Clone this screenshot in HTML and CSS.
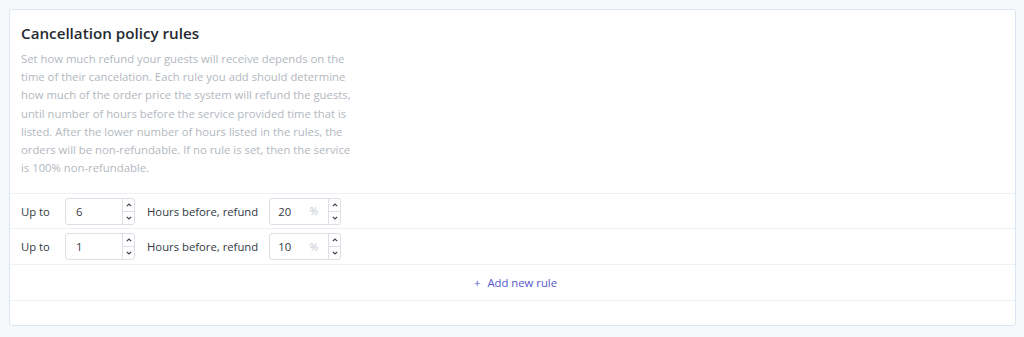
FILE: index.html
```html
<!DOCTYPE html>
<html>
<head>
<meta charset="utf-8">
<link rel="stylesheet" href="styles.css">
</head>
<body>
<div class="card">
  <div class="head">
    <h2 class="title">Cancellation policy rules</h2>
    <p class="desc">Set how much refund your guests will receive depends on the time of their cancelation. Each rule you add should determine how much of the order price the system will refund the guests, until number of hours before the service provided time that is listed. After the lower number of hours listed in the rules, the orders will be non-refundable. If no rule is set, then the service is 100% non-refundable.</p>
  </div>
  <div class="row">
    <span class="lbl">Up to</span>
    <div class="num hours"><span class="val">6</span><div class="spin"><span class="up"><svg viewBox="0 0 6 4" width="6" height="4"><path d="M0.8 3.2 L3 1 L5.2 3.2" /></svg></span><span class="dn"><svg viewBox="0 0 6 4" width="6" height="4"><path d="M0.8 0.8 L3 3 L5.2 0.8" /></svg></span></div></div>
    <span class="txt">Hours before, refund</span>
    <div class="num pct"><span class="val">20</span><span class="unit">%</span><div class="spin"><span class="up"><svg viewBox="0 0 6 4" width="6" height="4"><path d="M0.8 3.2 L3 1 L5.2 3.2" /></svg></span><span class="dn"><svg viewBox="0 0 6 4" width="6" height="4"><path d="M0.8 0.8 L3 3 L5.2 0.8" /></svg></span></div></div>
  </div>
  <div class="row">
    <span class="lbl">Up to</span>
    <div class="num hours"><span class="val">1</span><div class="spin"><span class="up"><svg viewBox="0 0 6 4" width="6" height="4"><path d="M0.8 3.2 L3 1 L5.2 3.2" /></svg></span><span class="dn"><svg viewBox="0 0 6 4" width="6" height="4"><path d="M0.8 0.8 L3 3 L5.2 0.8" /></svg></span></div></div>
    <span class="txt">Hours before, refund</span>
    <div class="num pct"><span class="val">10</span><span class="unit">%</span><div class="spin"><span class="up"><svg viewBox="0 0 6 4" width="6" height="4"><path d="M0.8 3.2 L3 1 L5.2 3.2" /></svg></span><span class="dn"><svg viewBox="0 0 6 4" width="6" height="4"><path d="M0.8 0.8 L3 3 L5.2 0.8" /></svg></span></div></div>
  </div>
  <div class="addrow">
    <span class="add"><span class="plus">+</span>Add new rule</span>
  </div>
  <div class="foot"></div>
</div>
</body>
</html>
```
FILE: styles.css
```css
* { box-sizing: border-box; }
html, body { margin: 0; padding: 0; }
body {
  background: #f6f8fb;
  padding: 9px 8px 0 9px;
  font-family: "Open Sans", "Noto Sans", sans-serif;
  color: #333a44;
  height: 337px;
}
.card {
  width: 1007px;
  height: 317px;
  background: #fff;
  border: 1px solid #dde6f0;
  border-radius: 3px;
}
.head {
  padding: 13px 11px 16px 11px;
}
.title {
  margin: 0;
  font-size: 15.2px;
  line-height: 20px;
  font-weight: 600;
  color: #252a31;
}
.desc {
  margin: 7px 0 0 0;
  width: 340px;
  font-size: 11.3px;
  line-height: 18.2px;
  color: #b3b8c0;
}
.row {
  display: flex;
  align-items: center;
  height: 35px;
  border-top: 1px solid #eef1f5;
  padding-left: 11px;
  font-size: 11.3px;
  color: #333a44;
}
.row + .row { height: 36px; }
.lbl { width: 44px; }
.txt { margin: 0 11px 0 12px; }
.num {
  display: flex;
  align-items: center;
  height: 27px;
  border: 1px solid #dcdfe5;
  border-radius: 3px;
  position: relative;
}
.hours { width: 70px; }
.pct { width: 72px; }
.val {
  flex: 1;
  padding-left: 10px;
}
.pct .val { padding-left: 8px; }
.unit {
  color: #c3c7ce;
  margin-right: 10px;
  font-size: 10.5px;
}
.spin {
  width: 12px;
  height: 100%;
  border-left: 1px solid #dcdfe5;
  display: flex;
  flex-direction: column;
}
.spin span {
  flex: 1;
  display: flex;
  align-items: center;
  justify-content: center;
}
.spin .dn { border-top: 1px solid #dcdfe5; }
.spin svg path {
  fill: none;
  stroke: #3f444c;
  stroke-width: 1.2;
}
.addrow {
  height: 37px;
  border-top: 1px solid #eef1f5;
  border-bottom: 1px solid #eef1f5;
  display: flex;
  align-items: center;
  justify-content: center;
  font-size: 11.3px;
  color: #5457c9;
}
.add { margin-left: 6px; }
.plus { margin-right: 7px; }
```
